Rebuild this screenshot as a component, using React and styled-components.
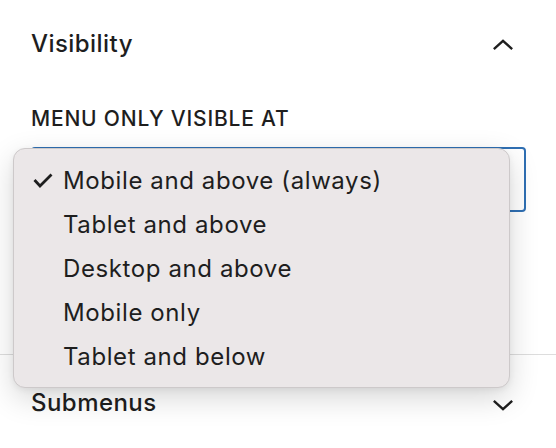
import React from "react";
import styled, { createGlobalStyle } from "styled-components";

const GlobalStyle = createGlobalStyle`
  html, body {
    margin: 0;
    padding: 0;
    background: #ffffff;
  }
  body {
    font-family: Inter, "Noto Sans", "Liberation Sans", sans-serif;
    color: #1e1e1e;
    -webkit-font-smoothing: antialiased;
  }
`;

const options = [
  "Mobile and above (always)",
  "Tablet and above",
  "Desktop and above",
  "Mobile only",
  "Tablet and below",
];

function Chevron({ up }) {
  return (
    <ChevronIcon viewBox="0 0 24 14" $up={up}>
      <path d="M2 2 L12 11 L22 2" />
    </ChevronIcon>
  );
}

function Check() {
  return (
    <CheckIcon viewBox="0 0 20 15">
      <path d="M1.5 7 L7 13 L18.5 1.5" />
    </CheckIcon>
  );
}

export default function App() {
  return (
    <>
      <GlobalStyle />
      <Panel>
        <Section $pad="28px 31px 142px">
          <Header>
            <Title>Visibility</Title>
            <Chevron up />
          </Header>
          <Label>Menu only visible at</Label>
          <SelectWrap>
            <Select aria-label="Menu only visible at" />
            <Menu>
              {options.map((opt, i) => (
                <Item key={opt}>
                  <Mark>{i === 0 && <Check />}</Mark>
                  {opt}
                </Item>
              ))}
            </Menu>
          </SelectWrap>
        </Section>
        <Divider />
        <Section $pad="32px 31px 40px">
          <Header>
            <Title>Submenus</Title>
            <Chevron />
          </Header>
        </Section>
      </Panel>
    </>
  );
}

const Panel = styled.div`
  width: 556px;
  height: 448px;
  overflow: hidden;
  background: #ffffff;
`;

const Section = styled.section`
  padding: ${(p) => p.$pad};
`;

const Header = styled.div`
  display: flex;
  align-items: center;
  justify-content: space-between;
  height: 32px;
  padding-right: 11px;
`;

const Title = styled.h2`
  margin: 0;
  font-size: 24px;
  line-height: 32px;
  font-weight: 500;
  letter-spacing: 0.45px;
`;

const ChevronIcon = styled.svg`
  width: 22px;
  height: 13px;
  transform: ${(p) => (p.$up ? "rotate(180deg)" : "none")};
  margin-top: ${(p) => (p.$up ? "0" : "4px")};

  path {
    fill: none;
    stroke: #1e1e1e;
    stroke-width: 2.6;
    stroke-linecap: butt;
    stroke-linejoin: miter;
  }
`;

const Label = styled.div`
  margin-top: 47px;
  font-size: 21px;
  line-height: 24px;
  font-weight: 500;
  text-transform: uppercase;
  letter-spacing: 0.8px;
`;

const SelectWrap = styled.div`
  position: relative;
  margin-top: 16px;
`;

const Select = styled.div`
  box-sizing: border-box;
  height: 65px;
  width: 495px;
  border: 2px solid #2f6fb3;
  border-radius: 4px;
  background: #ffffff;
`;

const Menu = styled.ul`
  position: absolute;
  left: -18px;
  top: 1px;
  box-sizing: border-box;
  width: 497px;
  height: 240px;
  margin: 0;
  padding: 9px 0 11px;
  list-style: none;
  background: #ebe7e8;
  border: 1px solid #cdc9ca;
  border-radius: 12px;
  box-shadow: 0 10px 30px rgba(0, 0, 0, 0.16), 0 2px 6px rgba(0, 0, 0, 0.06);
`;

const Item = styled.li`
  display: flex;
  align-items: center;
  height: 44px;
  padding-left: 19px;
  font-size: 24px;
  font-weight: 400;
  color: #1e1e1e;
  letter-spacing: 0.6px;
`;

const Mark = styled.span`
  display: inline-flex;
  align-items: center;
  width: 30px;
  flex: none;
`;

const CheckIcon = styled.svg`
  width: 20px;
  height: 15px;

  path {
    fill: none;
    stroke: #1e1e1e;
    stroke-width: 2.8;
  }
`;

const Divider = styled.hr`
  margin: 0;
  border: none;
  height: 1px;
  background: #dddddd;
`;
